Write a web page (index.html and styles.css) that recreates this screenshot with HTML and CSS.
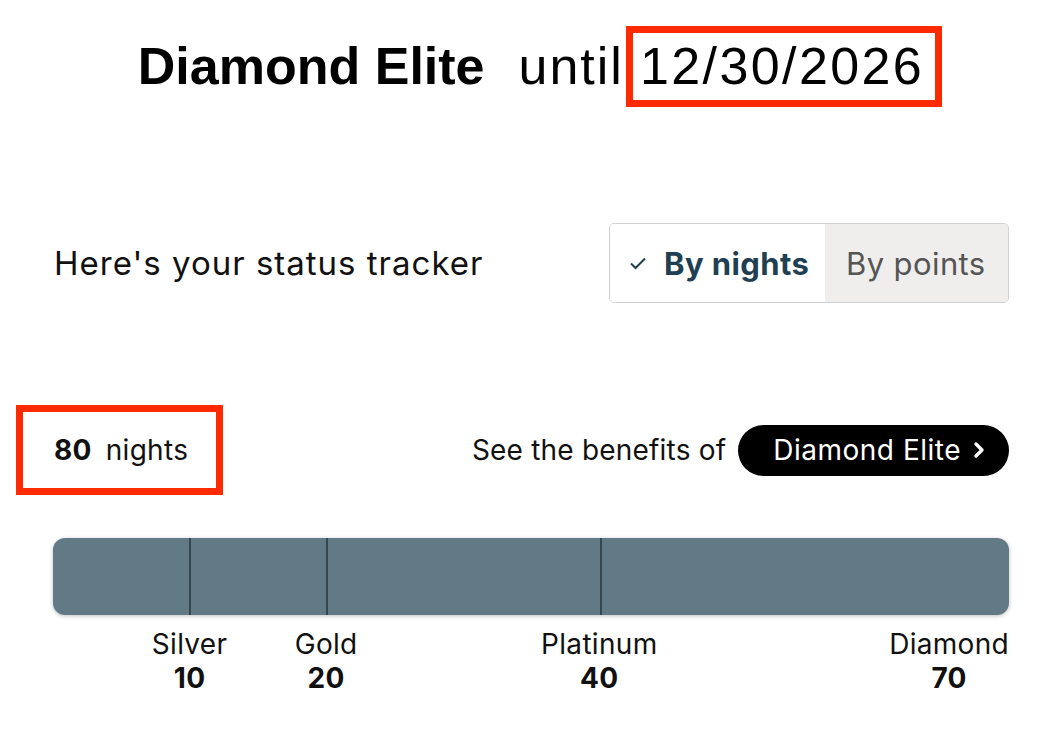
FILE: index.html
```html
<!DOCTYPE html>
<html>
<head>
<meta charset="utf-8">
<link rel="stylesheet" href="styles.css">
</head>
<body>
<div class="page">
  <h1 class="title"><span class="tier">Diamond Elite</span><span class="until">until</span><span class="date">12/30/2026</span></h1>

  <div class="tracker-row">
    <div class="tracker-label">Here's your status tracker</div>
    <div class="toggle">
      <div class="seg seg-on"><svg class="check" width="20" height="16" viewBox="0 0 20 16"><path d="M3 8.5 L7.5 13 L17 3.5" fill="none" stroke="#1f3f52" stroke-width="2"/></svg>By nights</div>
      <div class="seg seg-off">By points</div>
    </div>
  </div>

  <div class="count-row">
    <div class="count"><b>80</b><span>nights</span></div>
    <div class="benefits">See the benefits of <span class="pill">Diamond Elite<svg width="16" height="20" viewBox="0 0 16 20"><path d="M5 4 L11 10 L5 16" fill="none" stroke="#fff" stroke-width="3.4" stroke-linecap="round" stroke-linejoin="round"/></svg></span></div>
  </div>

  <div class="bar">
    <div class="bseg s10"></div>
    <div class="bseg s10 tick"></div>
    <div class="bseg s20 tick"></div>
    <div class="bseg s30 tick"></div>
  </div>
  <div class="labels">
    <div class="lab mid"><div>Silver</div><b>10</b></div>
    <div class="lab mid"><div>Gold</div><b>20</b></div>
    <div class="lab mid"><div>Platinum</div><b>40</b></div>
    <div class="lab end"><div>Diamond</div><b>70</b></div>
  </div>
</div>
</body>
</html>
```

FILE: styles.css
```css
html, body {
  margin: 0;
  padding: 0;
  background: #fff;
}
body {
  font-family: Inter, "Liberation Sans", sans-serif;
  color: #111;
}
.page {
  width: 1058px;
  height: 744px;
  overflow: hidden;
  display: flex;
  flex-direction: column;
}
.title {
  margin: 26px 0 0 0;
  display: flex;
  justify-content: center;
  align-items: center;
  font-family: "Liberation Sans", Arial, sans-serif;
  font-size: 52px;
  font-weight: 400;
  line-height: 67px;
  padding-left: 22px;
  color: #000;
}
.tier {
  font-weight: 700;
  margin-right: 34px;
}
.until {
  margin-right: 2px;
  letter-spacing: 2px;
}
.date {
  border: 7px solid #ff2a00;
  padding: 0 11px 0 7px;
  letter-spacing: 2.4px;
  line-height: 67px;
}
.tracker-row {
  margin-top: 116px;
  display: flex;
  justify-content: space-between;
  align-items: center;
  padding: 0 49px 0 54px;
}
.tracker-label {
  font-size: 33px;
  letter-spacing: 1px;
}
.toggle {
  display: flex;
  border: 1.5px solid #cfd2d4;
  border-radius: 5px;
  overflow: hidden;
  height: 78px;
}
.seg {
  display: flex;
  align-items: center;
  font-size: 31px;
  letter-spacing: 0.4px;
  box-sizing: border-box;
}
.seg-on {
  background: #fff;
  color: #1f3f52;
  font-weight: 700;
  padding-left: 18px;
  width: 215px;
}
.check {
  margin-right: 16px;
}
.seg-off {
  background: #efeeec;
  color: #555;
  padding-left: 21px;
  width: 183px;
}
.count-row {
  margin-top: 102px;
  display: flex;
  justify-content: space-between;
  align-items: center;
  padding: 0 49px 0 16px;
}
.count {
  border: 7px solid #ff2a00;
  width: 207px;
  height: 90px;
  box-sizing: border-box;
  display: flex;
  align-items: center;
  padding-left: 31px;
  font-size: 28px;
  letter-spacing: 0.3px;
}
.count b {
  font-weight: 700;
  margin-right: 14px;
}
.benefits {
  display: flex;
  align-items: center;
  font-size: 28px;
  letter-spacing: 0.2px;
}
.pill {
  margin-left: 12px;
  background: #000;
  color: #fff;
  border-radius: 26px;
  height: 51px;
  display: flex;
  align-items: center;
  padding: 0 22px 0 35px;
  letter-spacing: 0.5px;
}
.pill svg {
  margin-left: 10px;
}
.bar {
  margin: 43px 49px 0 53px;
  height: 77px;
  border-radius: 12px;
  background: #627a86;
  display: flex;
  overflow: hidden;
  box-shadow: 0 1px 4px rgba(0,0,0,0.25);
}
.s10 { flex: 10; }
.s20 { flex: 20; }
.s30 { flex: 30; }
.tick { border-left: 2px solid #34474f; }
.labels {
  margin: 12px 49px 0 53px;
  display: grid;
  grid-template-columns: 10fr 10fr 20fr 30fr;
  font-size: 28px;
  letter-spacing: 0.3px;
  line-height: 34px;
}
.lab {
  justify-self: end;
  text-align: center;
}
.lab b { font-weight: 700; }
.mid { transform: translateX(50%); }
```
